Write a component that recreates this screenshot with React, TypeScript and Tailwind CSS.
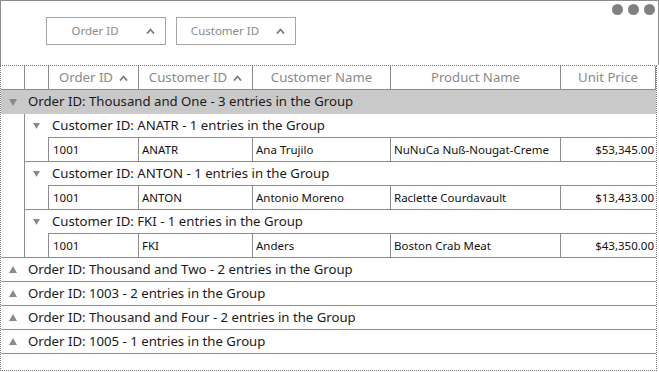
import React from "react";

const F = { fontFamily: '"Noto Sans", "Open Sans", sans-serif' };

function Down({ cls }: { cls: string }) {
  return (
    <svg width="8" height="7" viewBox="0 0 8 7" className={cls}>
      <path d="M0 0 L8 0 L4 7 Z" fill="#8a8a8a" />
    </svg>
  );
}
function Up({ cls }: { cls: string }) {
  return (
    <svg width="8" height="7" viewBox="0 0 8 7" className={cls}>
      <path d="M0 7 L8 7 L4 0 Z" fill="#8a8a8a" />
    </svg>
  );
}
function Caret({ cls }: { cls?: string }) {
  return (
    <svg width="9" height="6" viewBox="0 0 9 6" className={cls}>
      <path d="M1 5.5 L4.5 1.5 L8 5.5" fill="none" stroke="#7a7a7a" strokeWidth="1.8" />
    </svg>
  );
}

const subgroups = [
  { id: "ANATR", name: "Ana Trujilo", product: "NuNuCa Nuß-Nougat-Creme", price: "$53,345.00" },
  { id: "ANTON", name: "Antonio Moreno", product: "Raclette Courdavault", price: "$13,433.00" },
  { id: "FKI", name: "Anders", product: "Boston Crab Meat", price: "$43,350.00" },
];

const collapsed = [
  "Order ID: Thousand and Two - 2 entries in the Group",
  "Order ID: 1003 - 2 entries in the Group",
  "Order ID: Thousand and Four - 2 entries in the Group",
  "Order ID: 1005 - 1 entries in the Group",
];

export default function App() {
  return (
    <div className="w-[659px] h-[372px] bg-white relative overflow-hidden" style={F}>
      {/* group drop area */}
      <div className="h-[65px] border-t border-l border-r border-[#8c8c8c] flex items-start pt-[16px] pl-[45px] gap-[10px]">
        {["Order ID", "Customer ID"].map((t) => (
          <div
            key={t}
            className="w-[120px] h-[28px] border border-[#a6a6a6] flex items-center text-[11.5px] text-[#8a8a8a]"
          >
            <span className="w-[96px] text-center">{t}</span>
            <Caret cls="ml-[3px]" />
          </div>
        ))}
        <div className="absolute right-[4px] top-[4px] flex gap-[5px]">
          <div className="w-[11px] h-[11px] rounded-full bg-[#808080]" />
          <div className="w-[11px] h-[11px] rounded-full bg-[#808080]" />
          <div className="w-[11px] h-[11px] rounded-full bg-[#808080]" />
        </div>
      </div>

      {/* grid */}
      <div className="w-[657px] h-[306px] border border-dotted border-[#777] flex flex-col">
        {/* header */}
        <div className="h-[24px] flex border-b border-[#8c8c8c] text-[13.2px] text-[#8a8a8a] shrink-0">
          <div className="w-[24px] border-r border-[#8c8c8c]" />
          <div className="w-[24px] border-r border-[#8c8c8c]" />
          <div className="w-[90px] border-r border-[#8c8c8c] flex items-center justify-center gap-[6px]">
            <span>Order ID</span>
            <Caret />
          </div>
          <div className="w-[114px] border-r border-[#8c8c8c] flex items-center justify-center gap-[6px]">
            <span>Customer ID</span>
            <Caret />
          </div>
          <div className="w-[138px] border-r border-[#8c8c8c] flex items-center justify-center">
            Customer Name
          </div>
          <div className="w-[170px] border-r border-[#8c8c8c] flex items-center justify-center">
            Product Name
          </div>
          <div className="flex-1 border-r border-[#8c8c8c] flex items-center justify-center">Unit Price</div>
        </div>

        {/* expanded group */}
        <div className="h-[24px] bg-[#c9c9c9] flex items-center text-[13.2px] text-[#1a1a1a] shrink-0">
          <Down cls="ml-[8px] mr-[11px]" />
          <span>Order ID: Thousand and One - 3 entries in the Group</span>
        </div>
        <div className="flex border-b border-[#8c8c8c] shrink-0">
          <div className="w-[24px] border-r border-[#8c8c8c]" />
          <div className="flex-1 flex flex-col">
            {subgroups.map((s, i) => (
              <div key={s.id} className={i < 2 ? "border-b border-[#8c8c8c]" : ""}>
                <div className="h-[23px] flex items-center text-[13.2px] text-[#1a1a1a]">
                  <Down cls="ml-[8px] mr-[12px] w-[7px] h-[6px]" />
                  <span>Customer ID: {s.id} - 1 entries in the Group</span>
                </div>
                <div className="h-[24px] ml-[23px] flex border-t border-l border-[#8c8c8c] text-[11.5px] text-[#111]">
                  <div className="w-[90px] border-r border-[#8c8c8c] flex items-center pl-[4px]">1001</div>
                  <div className="w-[114px] border-r border-[#8c8c8c] flex items-center pl-[3px]">{s.id}</div>
                  <div className="w-[138px] border-r border-[#8c8c8c] flex items-center pl-[3px]">{s.name}</div>
                  <div className="w-[170px] border-r border-[#8c8c8c] flex items-center pl-[3px]">{s.product}</div>
                  <div className="flex-1 flex items-center justify-end pr-[2px]">{s.price}</div>
                </div>
              </div>
            ))}
          </div>
        </div>

        {/* collapsed groups */}
        {collapsed.map((t) => (
          <div key={t} className="h-[24px] flex items-center border-b border-[#8c8c8c] text-[13.2px] text-[#1a1a1a] shrink-0">
            <Up cls="ml-[8px] mr-[11px]" />
            <span>{t}</span>
          </div>
        ))}
      </div>
    </div>
  );
}
